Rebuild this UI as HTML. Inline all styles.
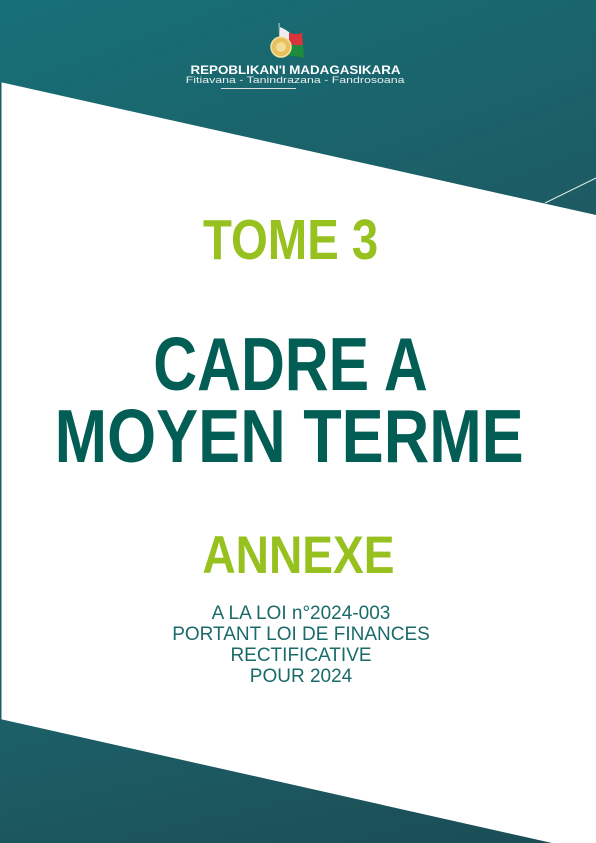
<!DOCTYPE html>
<html><head><meta charset="utf-8"><style>
html,body{margin:0;padding:0;width:596px;height:843px;overflow:hidden;background:#fff;font-family:"Liberation Sans",sans-serif}
.t{position:absolute;left:0;width:596px;text-align:center;white-space:nowrap}
.t span{display:inline-block}
</style></head><body>
<svg width="596" height="843" style="position:absolute;left:0;top:0">
<defs>
<linearGradient id="g1" x1="0" y1="0" x2="1" y2="1"><stop offset="0" stop-color="#177078"/><stop offset="1" stop-color="#1d5a62"/></linearGradient>
<linearGradient id="g2" x1="0" y1="0" x2="1" y2="1"><stop offset="0" stop-color="#1c6068"/><stop offset="1" stop-color="#1b4d55"/></linearGradient>
</defs>
<polygon points="0,0 596,0 596,215 0,82" fill="url(#g1)"/>
<line x1="545" y1="203" x2="596" y2="178" stroke="#d8e4e4" stroke-width="1.2"/>
<rect x="0" y="82" width="1.5" height="640" fill="#1a5f66"/>
<polygon points="0,719 552,843 0,843" fill="url(#g2)"/>
<line x1="279" y1="23" x2="280" y2="45" stroke="#ccc" stroke-width="1"/>
<path d="M280,27 Q287,30 291,34 L291,52 Q285,48 280,48 Z" fill="#eee"/>
<path d="M289,33 Q297,35 302,33 L303,45 Q296,46 289,44 Z" fill="#d8343c"/>
<path d="M289,44 Q296,46 303,45 L304,58 Q297,56 289,56 Z" fill="#1d8a3c"/>
<circle cx="281" cy="47" r="10" fill="#e9c060" stroke="#f6e2a0" stroke-width="1.5"/>
<circle cx="281" cy="47" r="5" fill="#f3dc95"/>
</svg>
<div class="t" style="top:65px;font-size:11.5px;line-height:13px;font-weight:bold;color:#fff;left:-3px"><span style="transform:scaleX(1.16)">REPOBLIKAN'I MADAGASIKARA</span></div>
<div class="t" style="top:76px;font-size:9.5px;line-height:10px;color:#e8eeee;left:-3px"><span style="transform:scaleX(1.3)">Fitiavana - Tanindrazana - Fandrosoana</span></div>
<div style="position:absolute;left:221px;top:88px;width:75px;height:1px;background:#ddd"></div>
<div class="t" style="top:207px;font-size:57px;font-weight:bold;color:#97c11f;line-height:66px;left:-7px"><span style="transform:scaleX(0.83)">TOME 3</span></div>
<div class="t" style="top:321px;font-size:75px;font-weight:bold;color:#025e55;line-height:86px;left:-8px"><span style="transform:scaleX(0.81)">CADRE A</span></div>
<div class="t" style="top:393px;font-size:75px;font-weight:bold;color:#025e55;line-height:86px;left:-9px"><span style="transform:scaleX(0.84)">MOYEN TERME</span></div>
<div class="t" style="top:525px;font-size:53px;font-weight:bold;color:#97c11f;line-height:62px"><span style="transform:scaleX(0.87)">ANNEXE</span></div>
<div class="t" style="top:603px;font-size:19px;color:#1b6a6a;line-height:21px;left:3px"><span>A LA LOI n°2024-003<br>PORTANT LOI DE FINANCES<br>RECTIFICATIVE<br>POUR 2024</span></div>
</body></html>
